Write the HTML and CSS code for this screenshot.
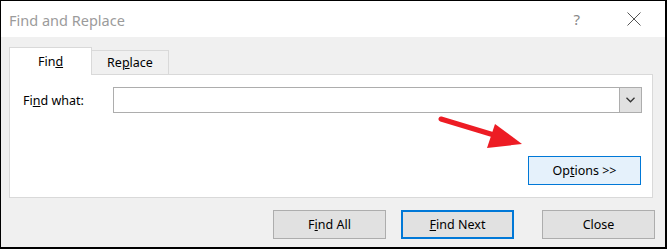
FILE: index.html
```html
<!DOCTYPE html>
<html lang="en">
<head>
    <meta charset="UTF-8">
    <title>Find and Replace</title>
    <link rel="stylesheet" href="styles.css">
</head>
<body>
    <div class="dialog">
        <div class="titlebar">
            <span class="title">Find and Replace</span>
            <span class="help">?</span>
            <svg class="close-x" width="14" height="14" viewBox="0 0 14 14">
                <path d="M0.5 0.5 L13.5 13.5 M13.5 0.5 L0.5 13.5" stroke="#555" stroke-width="1" fill="none"/>
            </svg>
        </div>
        <div class="content">
            <div class="tabs">
                <div class="tab active">Fin<u>d</u></div>
                <div class="tab">Re<u>p</u>lace</div>
            </div>
            <div class="panel">
                <div class="find-row">
                    <label class="find-label">Fi<u>n</u>d what:</label>
                    <div class="combo">
                        <input type="text" class="combo-input">
                        <div class="combo-btn">
                            <svg width="9" height="6" viewBox="0 0 9 6">
                                <path d="M0.5 0.8 L4.5 4.8 L8.5 0.8" stroke="#333" stroke-width="1.3" fill="none"/>
                            </svg>
                        </div>
                    </div>
                </div>
                <div class="options-row">
                    <button class="btn btn-options">Op<u>t</u>ions &gt;&gt;</button>
                </div>
                <svg class="arrow" width="90" height="40" viewBox="0 0 90 40">
                    <line x1="3" y1="4" x2="56" y2="20" stroke="#ed1c24" stroke-width="5" stroke-linecap="round"/>
                    <polygon points="57,9 49,33 84,29" fill="#ed1c24"/>
                </svg>
            </div>
            <div class="actions">
                <button class="btn">F<u>i</u>nd All</button>
                <button class="btn btn-default"><u>F</u>ind Next</button>
                <button class="btn btn-close">Close</button>
            </div>
        </div>
    </div>
</body>
</html>
```

FILE: styles.css
```css
body {
    margin: 0;
    padding: 0;
    font-family: "Noto Sans", "Open Sans", sans-serif;
    font-size: 12px;
    color: #000;
    background-color: #fff;
}
.dialog {
    width: 664px;
    height: 246px;
    border-style: solid;
    border-color: #000;
    border-width: 1px 2px 2px 1px;
    display: flex;
    flex-direction: column;
}
.titlebar {
    height: 36px;
    background-color: #fff;
    display: flex;
    align-items: center;
    padding-left: 8px;
}
.title {
    font-size: 14.5px;
    color: #9b9b9b;
    flex: 1;
    margin-top: 1px;
}
.help {
    font-size: 15px;
    color: #888;
    margin-right: 47px;
}
.close-x {
    margin-right: 24px;
}
.content {
    flex: 1;
    background-color: #f0f0f0;
    padding: 10px 10px 0 8px;
}
.tabs {
    display: flex;
    align-items: flex-end;
    height: 27px;
    position: relative;
    z-index: 1;
}
.tab {
    height: 24px;
    box-sizing: border-box;
    width: 78px;
    border: 1px solid #d9d9d9;
    border-bottom: none;
    background-color: #f0f0f0;
    display: flex;
    align-items: center;
    justify-content: center;
    margin-left: -1px;
    font-size: 12.5px;
}
.tab.active {
    width: 83px;
    height: 28px;
    margin-left: 0;
    background-color: #fff;
    margin-bottom: -1px;
    padding-bottom: 1px;
}
.panel {
    background-color: #fff;
    border: 1px solid #d9d9d9;
    margin-right: 2px;
    padding: 12px 10px 0 13px;
    box-sizing: border-box;
    height: 124px;
    position: relative;
}
.find-row {
    display: flex;
    align-items: center;
}
.find-label {
    width: 90px;
    font-size: 12.5px;
}
.combo {
    flex: 1;
    display: flex;
    height: 26px;
    border: 1px solid #adadad;
    box-sizing: border-box;
}
.combo-input {
    flex: 1;
    border: none;
    outline: none;
    padding: 0;
    margin: 0;
    min-width: 0;
}
.combo-btn {
    width: 21px;
    background-color: #e1e1e1;
    border-left: 1px solid #adadad;
    display: flex;
    align-items: center;
    justify-content: center;
}
.options-row {
    display: flex;
    justify-content: flex-end;
    margin-top: 43px;
    padding-right: 1px;
}
.btn {
    width: 113px;
    height: 29px;
    box-sizing: border-box;
    border: 1px solid #adadad;
    background-color: #e1e1e1;
    font-family: "Noto Sans", "Open Sans", sans-serif;
    font-size: 12.5px;
    color: #000;
    padding: 0;
}
.btn-options {
    background-color: #e5f1fb;
    border-color: #0078d7;
}
.btn-default {
    border: 2px solid #0078d7;
}
.arrow {
    position: absolute;
    left: 428px;
    top: 40px;
}
.actions {
    display: flex;
    justify-content: flex-end;
    margin-top: 12px;
    gap: 15px;
}
.btn-close {
    margin-left: 13px;
}
```
